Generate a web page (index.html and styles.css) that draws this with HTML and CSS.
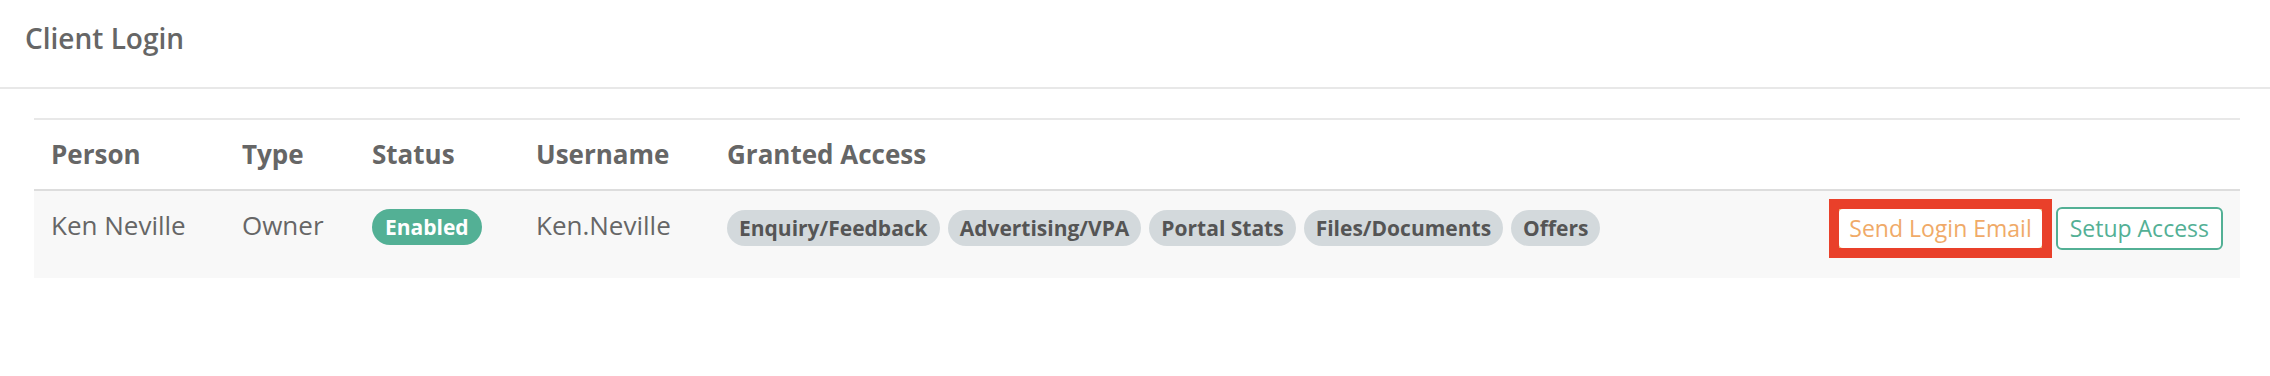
FILE: index.html
```html
<!DOCTYPE html>
<html lang="en">

<head>
    <meta charset="UTF-8">
    <meta name="viewport" content="width=device-width, initial-scale=1.0">
    <title>Client Login</title>
    <link rel="stylesheet" href="styles.css">
</head>

<body>

    <div class="panel">
        <div class="panel-heading">
            <h3 class="panel-title">Client Login</h3>
        </div>

        <div class="panel-body">
            <table class="login-table">
                <colgroup>
                    <col class="col-person">
                    <col class="col-type">
                    <col class="col-status">
                    <col class="col-username">
                    <col>
                    <col class="col-actions">
                </colgroup>
                <thead>
                    <tr>
                        <th>Person</th>
                        <th>Type</th>
                        <th>Status</th>
                        <th>Username</th>
                        <th>Granted Access</th>
                        <th></th>
                    </tr>
                </thead>
                <tbody>
                    <tr>
                        <td>Ken Neville</td>
                        <td>Owner</td>
                        <td><span class="badge badge-enabled">Enabled</span></td>
                        <td>Ken.Neville</td>
                        <td class="cell-flush">
                            <div class="access-list">
                                <span class="chip">Enquiry/Feedback</span>
                                <span class="chip">Advertising/VPA</span>
                                <span class="chip">Portal Stats</span>
                                <span class="chip">Files/Documents</span>
                                <span class="chip">Offers</span>
                            </div>
                        </td>
                        <td class="cell-flush">
                            <div class="actions">
                                <!-- highlighted button -->
                                <span class="highlight">
                                    <button class="btn btn-send">Send Login Email</button>
                                </span>
                                <button class="btn btn-setup">Setup Access</button>
                            </div>
                        </td>
                    </tr>
                </tbody>
            </table>
        </div>
    </div>

</body>

</html>
```

FILE: styles.css
```css
body {
    font-family: "Open Sans", Arial, sans-serif;
    margin: 0;
    padding: 0;
    background-color: #fff;
    color: #666;
}

.panel-heading {
    padding: 18px 25px 29px;
    border-bottom: 2px solid #e8e8e8;
}

.panel-title {
    margin: 0;
    font-size: 28px;
    font-weight: 600;
    line-height: 40px;
    color: #666;
}

.panel-body {
    padding: 29px 30px 0 34px;
}

.login-table {
    width: 100%;
    table-layout: fixed;
    border-collapse: collapse;
    border-top: 2px solid #e8e8e8;
}

.col-person {
    width: 191px;
}

.col-type {
    width: 130px;
}

.col-status {
    width: 164px;
}

.col-username {
    width: 191px;
}

.col-actions {
    width: 423px;
}

th {
    text-align: left;
    font-size: 26px;
    font-weight: 700;
    line-height: 37px;
    padding: 16px 17px;
    border-bottom: 2px solid #dddddd;
    vertical-align: bottom;
}

td {
    font-size: 26px;
    line-height: 37px;
    padding: 16px 17px 33px;
    vertical-align: top;
    background-color: #f8f8f8;
}

td.cell-flush {
    padding-bottom: 0;
}

.badge {
    display: inline-block;
    height: 36px;
    line-height: 36px;
    padding: 0 13px;
    border-radius: 18px;
    font-size: 21px;
    font-weight: 700;
}

.badge-enabled {
    background-color: #53b095;
    color: #fff;
}

.access-list {
    display: flex;
    flex-wrap: wrap;
    gap: 8px;
    padding-top: 3px;
}

.chip {
    display: inline-block;
    height: 36px;
    line-height: 36px;
    padding: 0 12px;
    border-radius: 18px;
    font-size: 21px;
    font-weight: 700;
    background-color: #d3d9dc;
    color: #555;
    white-space: nowrap;
}

.actions {
    display: flex;
    justify-content: flex-end;
    gap: 12px;
}

.btn {
    font-family: "Open Sans", Arial, sans-serif;
    font-size: 23px;
    line-height: 31px;
    padding: 4px 10px;
    background-color: #fff;
    border-radius: 6px;
    cursor: pointer;
    white-space: nowrap;
}

.btn-send {
    color: #f0aa68;
    border: 2px solid #f0aa68;
}

.btn-setup {
    padding: 4px 12px;
    color: #53b095;
    border: 2px solid #53b095;
}

/* Red annotation box drawn over the button */
.highlight {
    position: relative;
    display: flex;
}

.highlight::after {
    content: "";
    position: absolute;
    top: -8px;
    right: -8px;
    bottom: -8px;
    left: -8px;
    border: 10px solid #e9402a;
}
```
